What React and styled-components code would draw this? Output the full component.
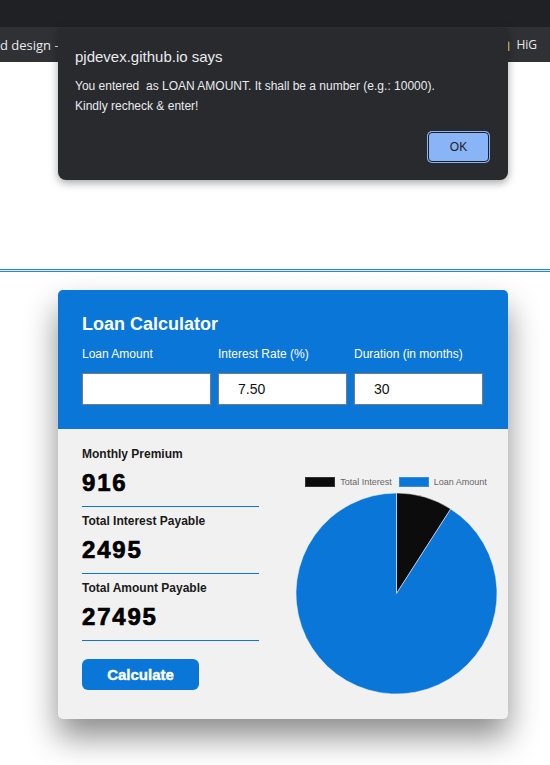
import React from "react";
import styled, { createGlobalStyle } from "styled-components";

const GlobalStyle = createGlobalStyle`
  html, body {
    margin: 0;
    padding: 0;
    background: #ffffff;
  }
  body {
    font-family: "Liberation Sans", Arial, sans-serif;
    width: 550px;
    height: 765px;
    overflow: hidden;
    position: relative;
  }
`;

const BLUE = "#0a76d7";

const Chrome = styled.div`
  background: #202124;
  padding-top: 27px;
`;

const BookmarkBar = styled.div`
  height: 35px;
  background: #303134;
  display: flex;
  align-items: center;
  justify-content: space-between;
  padding: 0 13px 0 0;
  color: #e8eaed;
  font-size: 13px;
  font-family: "Open Sans", "Liberation Sans", sans-serif;
`;

const Bookmark = styled.span`
  display: flex;
  align-items: center;
  gap: ${(p) => p.$gap || 6}px;
  white-space: nowrap;
  font-size: ${(p) => p.$size || 13}px;
`;

const Dialog = styled.div`
  position: absolute;
  top: 28px;
  left: 58px;
  width: 450px;
  box-sizing: border-box;
  padding: 20px 18px 17px 17px;
  background: #292a2d;
  border-radius: 0 0 8px 8px;
  box-shadow: 0 3px 8px rgba(0, 0, 0, 0.35);
  color: #e8eaed;
  z-index: 10;
`;

const DialogTitle = styled.div`
  font-size: 15px;
  line-height: 18px;
`;

const DialogMessage = styled.div`
  margin-top: 10px;
  font-size: 12px;
  line-height: 20px;
  white-space: pre;
`;

const DialogActions = styled.div`
  display: flex;
  justify-content: flex-end;
  margin-top: 15px;
`;

const OkButton = styled.button`
  width: 61px;
  height: 30px;
  margin: 1px;
  background: #8ab4f8;
  border: 1px solid #1d1e21;
  border-radius: 4px;
  box-shadow: 0 0 0 1px #8ab4f8;
  color: #202124;
  font-family: "Liberation Sans", Arial, sans-serif;
  font-size: 12px;
  cursor: pointer;
`;

const Page = styled.div`
  background: #ffffff;
`;

const PageHeader = styled.div`
  height: 207px;
`;

const Rule = styled.div`
  height: 1px;
  border-top: 1px solid #2684d8;
  border-bottom: 1px solid #2684d8;
  background: #e4f0fa;
`;

const CardWrap = styled.div`
  padding: 18px 0 0 58px;
`;

const Card = styled.div`
  width: 450px;
  border-radius: 5px;
  overflow: hidden;
  background: #f1f1f1;
  box-shadow: 0 18px 32px rgba(0, 0, 0, 0.45);
`;

const CardHeader = styled.div`
  background: ${BLUE};
  padding: 24px 24px 24px;
  color: #ffffff;
`;

const Title = styled.h1`
  margin: 0;
  font-size: 18px;
  line-height: 21px;
  font-weight: bold;
`;

const Fields = styled.div`
  display: grid;
  grid-template-columns: repeat(3, 129px);
  gap: 7px;
  margin-top: 12px;
`;

const Field = styled.label`
  display: flex;
  flex-direction: column;
  gap: 12px;
  font-size: 12px;
  line-height: 14px;
`;

const Input = styled.input`
  box-sizing: border-box;
  width: 100%;
  height: 32px;
  border: 1px solid #7a7a7a;
  background: #ffffff;
  padding: 0 0 0 19px;
  font-family: "Liberation Sans", Arial, sans-serif;
  font-size: 14px;
  color: #111;
  outline: none;
`;

const CardBody = styled.div`
  display: grid;
  grid-template-columns: 177px 224px;
  column-gap: 25px;
  align-items: start;
  padding: 18px 0 24px 24px;
`;

const Stats = styled.div`
  display: flex;
  flex-direction: column;
  padding-bottom: 5px;
`;

const Stat = styled.div`
  padding-top: ${(p) => (p.$first ? 0 : 7)}px;
  border-bottom: 1px solid ${BLUE};
`;

const StatLabel = styled.div`
  font-size: 12px;
  line-height: 14px;
  font-weight: bold;
  color: #1a1a1a;
`;

const StatValue = styled.div`
  margin: 8px 0 9px;
  font-size: 24px;
  line-height: 28px;
  font-weight: bold;
  letter-spacing: 1.8px;
  -webkit-text-stroke: 0.7px #000;
  color: #000;
`;

const CalcButton = styled.button`
  margin-top: 18px;
  width: 117px;
  height: 31px;
  border: none;
  border-radius: 6px;
  background: ${BLUE};
  color: #ffffff;
  font-family: "Liberation Sans", Arial, sans-serif;
  font-size: 15px;
  font-weight: bold;
  -webkit-text-stroke: 0.4px #fff;
  cursor: pointer;
`;

const ChartArea = styled.div`
  display: flex;
  flex-direction: column;
  align-items: center;
  padding-top: 30px;
`;

const Legend = styled.div`
  display: flex;
  gap: 7px;
  font-size: 9px;
  line-height: 10px;
  color: #666;
`;

const LegendItem = styled.span`
  display: flex;
  align-items: center;
  gap: 5px;
`;

const Swatch = styled.span`
  width: 28px;
  height: 8px;
  border: 1px solid ${(p) => (p.$color === "#0c0c0c" ? "#333" : "#3a8ee0")};
  background: ${(p) => p.$color};
`;

const Pie = ({ parts, size }) => {
  const total = parts.reduce((s, p) => s + p.value, 0);
  const r = size / 2;
  let angle = 0;
  return (
    <svg width={size} height={size} viewBox={`0 0 ${size} ${size}`} style={{ marginTop: 6 }}>
      {parts.map((p) => {
        const start = angle;
        angle += (p.value / total) * Math.PI * 2;
        const x1 = r + r * Math.sin(start);
        const y1 = r - r * Math.cos(start);
        const x2 = r + r * Math.sin(angle);
        const y2 = r - r * Math.cos(angle);
        const large = angle - start > Math.PI ? 1 : 0;
        return (
          <path
            key={p.label}
            d={`M${r} ${r} L${x1} ${y1} A${r} ${r} 0 ${large} 1 ${x2} ${y2} Z`}
            fill={p.color}
            stroke="#ffffff"
            strokeWidth="0.5"
          />
        );
      })}
    </svg>
  );
};

// the bookmark folder sits mostly under the dialog; only its right edge shows
const FolderIcon = () => (
  <svg width="14" height="14" viewBox="0 0 14 14">
    <path d="M1 2h5l1.5 1.5H13V13H1z" fill="#e8c46a" />
    <path d="M13 4v9" stroke="#c9a24a" strokeWidth="1" />
  </svg>
);

const stats = [
  { label: "Monthly Premium", value: "916" },
  { label: "Total Interest Payable", value: "2495" },
  { label: "Total Amount Payable", value: "27495" },
];

const parts = [
  { label: "Total Interest", value: 2495, color: "#0c0c0c" },
  { label: "Loan Amount", value: 25000, color: BLUE },
];

export default function App() {
  return (
    <>
      <GlobalStyle />
      <Chrome>
        <BookmarkBar>
          <Bookmark>d design - |</Bookmark>
          <Bookmark $size={12} $gap={6}>
            <FolderIcon />
            HiG
          </Bookmark>
        </BookmarkBar>
      </Chrome>

      <Dialog>
        <DialogTitle>pjdevex.github.io says</DialogTitle>
        <DialogMessage>
          {"You entered  as LOAN AMOUNT. It shall be a number (e.g.: 10000).\nKindly recheck & enter!"}
        </DialogMessage>
        <DialogActions>
          <OkButton>OK</OkButton>
        </DialogActions>
      </Dialog>

      <Page>
        <PageHeader />
        <Rule />
        <CardWrap>
          <Card>
            <CardHeader>
              <Title>Loan Calculator</Title>
              <Fields>
                <Field>
                  Loan Amount
                  <Input defaultValue="" />
                </Field>
                <Field>
                  Interest Rate (%)
                  <Input defaultValue="7.50" />
                </Field>
                <Field>
                  Duration (in months)
                  <Input defaultValue="30" />
                </Field>
              </Fields>
            </CardHeader>
            <CardBody>
              <Stats>
                {stats.map((s, i) => (
                  <Stat key={s.label} $first={i === 0}>
                    <StatLabel>{s.label}</StatLabel>
                    <StatValue>{s.value}</StatValue>
                  </Stat>
                ))}
                <CalcButton>Calculate</CalcButton>
              </Stats>
              <ChartArea>
                <Legend>
                  {parts.map((p) => (
                    <LegendItem key={p.label}>
                      <Swatch $color={p.color} />
                      {p.label}
                    </LegendItem>
                  ))}
                </Legend>
                <Pie parts={parts} size={201} />
              </ChartArea>
            </CardBody>
          </Card>
        </CardWrap>
      </Page>
    </>
  );
}
